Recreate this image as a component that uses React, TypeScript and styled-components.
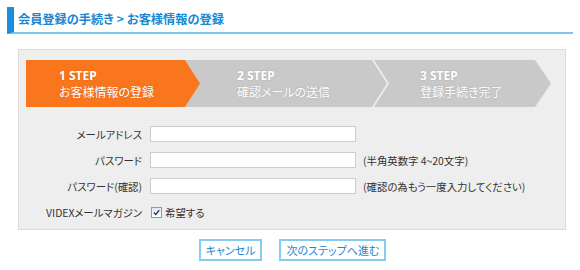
import React from "react";
import styled, { createGlobalStyle } from "styled-components";

const GlobalStyle = createGlobalStyle`
  body {
    margin: 0;
    background: #ffffff;
    font-family: "Noto Sans CJK JP", "Noto Sans", sans-serif;
    font-feature-settings: "palt";
    color: #333333;
  }
`;

const Page = styled.div`
  width: 580px;
  padding-top: 7px;
`;

const Title = styled.h1`
  margin: 0 0 0 7px;
  width: 555px;
  height: 25px;
  padding-left: 4px;
  border-left: 7px solid #1b8fde;
  border-bottom: 2px solid #7ec5ee;
  font-size: 12.2px;
  font-weight: bold;
  line-height: 25px;
  color: #1a88d2;
`;

const Sep = styled.span`
  margin: 0 3px;
`;

const Panel = styled.section`
  margin: 15px 0 0 18px;
  width: 532px;
  padding: 10px 7px 4px 7px;
  background: #eeeeee;
  border: 1px solid #dddddd;
`;

const StepBar = styled.div`
  display: flex;
  height: 47px;
`;

const Step = styled.div<{ $w: number; $pad: number; $active?: boolean; $z: number; $first?: boolean; $notch?: boolean }>`
  position: relative;
  z-index: ${({ $z }) => $z};
  width: ${({ $w }) => $w}px;
  margin-left: ${({ $first }) => ($first ? 0 : -15)}px;
  padding-left: ${({ $pad }) => $pad}px;
  box-sizing: border-box;
  display: flex;
  flex-direction: column;
  justify-content: center;
  background: ${({ $active }) => ($active ? "#fa761c" : "#c9c9c9")};
  color: #ffffff;
  font-size: 12px;
  line-height: 16px;
  text-shadow: 0 0 2px rgba(0, 0, 0, 0.18);
  clip-path: ${({ $notch }) =>
    $notch
      ? "polygon(2px 0, calc(100% - 16px) 0, 100% 50%, calc(100% - 16px) 100%, 2px 100%, 17px 50%)"
      : "polygon(0 0, calc(100% - 15px) 0, 100% 50%, calc(100% - 15px) 100%, 0 100%)"};
`;

const StepNo = styled.span`
  font-weight: bold;
  font-family: "Noto Sans", "Noto Sans CJK JP", sans-serif;
`;

const Form = styled.div`
  margin-top: 14px;
  display: grid;
  grid-template-columns: 116px 206px auto;
  grid-auto-rows: 26px;
  column-gap: 8px;
  align-items: center;
  font-size: 10.4px;
`;

const Label = styled.div`
  text-align: right;
  white-space: nowrap;
`;

const Input = styled.input`
  box-sizing: border-box;
  width: 206px;
  height: 16px;
  margin: 0;
  border: 1px solid #cccccc;
  background: #ffffff;
  outline: none;
`;

const Hint = styled.div`
  white-space: nowrap;
  margin-left: -1px;
`;

const CheckRow = styled.label`
  display: flex;
  align-items: center;
  gap: 3px;
  grid-column: span 2;
`;

const CheckBox = styled.span`
  width: 9px;
  height: 9px;
  margin-left: 1px;
  border: 1px solid #7f9db9;
  background: linear-gradient(#e6e6e6, #ffffff);
  display: flex;
  align-items: center;
  justify-content: center;
`;

const Buttons = styled.div`
  display: flex;
  justify-content: center;
  gap: 17px;
  margin-top: 9px;
  padding-left: 5px;
`;

const Button = styled.button`
  height: 22px;
  padding: 0 5px;
  background: #ffffff;
  border: 2px solid #86ccf2;
  color: #1a88d2;
  font-family: "Noto Sans CJK JP", sans-serif;
  font-feature-settings: "palt";
  font-size: 11px;
  cursor: pointer;
`;

const steps = [
  { no: "1 STEP", text: "お客様情報の登録", w: 174, pad: 33 },
  { no: "2 STEP", text: "確認メールの送信", w: 202, pad: 52 },
  { no: "3 STEP", text: "登録手続き完了", w: 179, pad: 48 },
];

export default function App() {
  return (
    <Page>
      <GlobalStyle />
      <Title>
        会員登録の手続き<Sep>&gt;</Sep>お客様情報の登録
      </Title>
      <Panel>
        <StepBar>
          {steps.map((s, i) => (
            <Step
              key={s.no}
              $w={s.w}
              $pad={s.pad}
              $active={i === 0}
              $first={i === 0}
              $notch={i === 2}
              $z={3 - i}
            >
              <StepNo>{s.no}</StepNo>
              <span>{s.text}</span>
            </Step>
          ))}
        </StepBar>
        <Form>
          <Label>メールアドレス</Label>
          <Input type="text" />
          <span />
          <Label>パスワード</Label>
          <Input type="password" />
          <Hint>(半角英数字 4~20文字)</Hint>
          <Label>パスワード(確認)</Label>
          <Input type="password" />
          <Hint>(確認の為もう一度入力してください)</Hint>
          <Label>VIDEXメールマガジン</Label>
          <CheckRow>
            <CheckBox>
              <svg width="7" height="7" viewBox="0 0 7 7">
                <path d="M0.8 3.4 L2.7 5.4 L6.2 1.2" fill="none" stroke="#21398f" strokeWidth="1.4" />
              </svg>
            </CheckBox>
            希望する
          </CheckRow>
        </Form>
      </Panel>
      <Buttons>
        <Button>キャンセル</Button>
        <Button>次のステップへ進む</Button>
      </Buttons>
    </Page>
  );
}
